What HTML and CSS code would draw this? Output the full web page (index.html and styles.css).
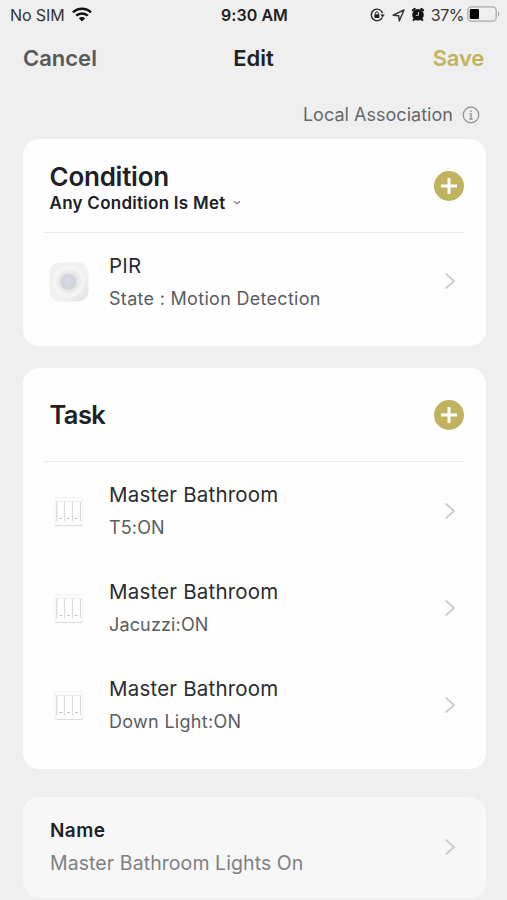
FILE: index.html
```html
<!DOCTYPE html>
<html lang="en">
<head>
<meta charset="utf-8">
<title>Edit</title>
<link rel="stylesheet" href="styles.css">
</head>
<body>
<svg width="0" height="0" class="defs" aria-hidden="true">
  <defs>
    <radialGradient id="ring"><stop offset="0" stop-color="#e2e3e6"/><stop offset=".6" stop-color="#e8e8ea"/><stop offset=".85" stop-color="#f6f6f6"/><stop offset="1" stop-color="#f2f2f2"/></radialGradient>
    <linearGradient id="shell" x1="0" y1="0" x2="1" y2="1"><stop offset="0" stop-color="#f0f0f0"/><stop offset=".6" stop-color="#f1f1f1"/><stop offset="1" stop-color="#e3e3e3"/></linearGradient>
    <radialGradient id="lens"><stop offset="0" stop-color="#d8dbe6"/><stop offset="1" stop-color="#d0d1da"/></radialGradient>
  </defs>
  <symbol id="chevron" viewBox="0 0 12 18"><path d="M1.700 1.500 10 9l-8.300 7.500" fill="none" stroke="#cbcccd" stroke-width="1.900"/></symbol>
  <symbol id="plus" viewBox="0 0 30 30"><circle cx="15" cy="15" r="15" fill="#c1b260"/><path d="M15 7v16M7 15h16" stroke="#fff" stroke-width="3"/></symbol>
  <symbol id="switch" viewBox="0 0 30 31">
    <path d="M1 1.500h27.500v28H1z" fill="#fcfcfc" stroke="#f4f4f4" stroke-width="1"/>
    <path d="M1 29.500h27.500" stroke="#dedede" stroke-width="1.200"/>
    <path d="M1 5.500h27.500" stroke="#ececec" stroke-width="1"/>
    <path d="M3 6h23.500v19H3z" fill="#fff"/>
    <path d="M2.700 6v19M10.500 6v19M18.500 6v19M26.500 6v19" stroke="#dadada" stroke-width="1.200"/>
    <path d="M5.700 22.500h2.300M13.300 22.500h2.300M21.200 22.500h2.300" stroke="#b5b5b5" stroke-width="1"/>
  </symbol>
</svg>
<header class="status">
  <div class="status-left"><span class="t carrier">No SIM</span>
    <svg class="wifi" width="20" height="15" viewBox="0 0 20 15"><g fill="none" stroke="#111" stroke-width="2.500"><path d="M1 5.300a13 13 0 0 1 18 0"/><path d="M4.200 8.700a8.400 8.400 0 0 1 11.600 0"/></g><path d="M10 14.600 6.800 11.300a4.600 4.600 0 0 1 6.400 0z" fill="#111"/></svg>
  </div>
  <span class="t clock">9:30 AM</span>
  <div class="status-right">
    <svg width="15" height="14" viewBox="0 0 15 14"><path d="M12.300 9.500a5.800 5.800 0 1 1 .3-4.300" fill="none" stroke="#222" stroke-width="1.300"/><path d="M10.400 6.600h4.400l-2.200 3z" fill="#222"/><rect x="4.400" y="6.300" width="5" height="3.700" rx=".4" fill="#222"/><path d="M5.400 6.500V5.300a1.500 1.500 0 0 1 3 0v1.200" fill="none" stroke="#222" stroke-width="1"/></svg>
    <svg class="nav-arrow" width="13" height="13" viewBox="0 0 13 13"><path d="M1.200 6.200 12 1 7.300 12 6.700 6.700z" fill="none" stroke="#333" stroke-width="1.400" stroke-linejoin="round"/></svg>
    <svg class="alarm" width="14" height="15" viewBox="0 0 14 15"><circle cx="7" cy="7.800" r="5.800" fill="#111"/><path d="M1.800 3.300 3.700 1.900M12.200 3.300 10.300 1.900M3.200 12.300l-.6.700M10.800 12.300l.6.700" stroke="#111" stroke-width="2" stroke-linecap="round"/><path d="M7.500 5v3.300H4.800" fill="none" stroke="#ccc" stroke-width="1"/></svg>
    <span class="t percent">37%</span>
    <svg class="battery" width="33" height="16" viewBox="0 0 33 16"><rect x=".8" y=".8" width="28.400" height="14.400" rx="3.800" fill="none" stroke="#a9a9a9" stroke-width="1.300"/><rect x="2.800" y="2.900" width="9.200" height="10.200" rx="1.300" fill="#000"/><path d="M31 5.500c1.700.6 1.700 4.400 0 5z" fill="#a9a9a9"/></svg>
  </div>
</header>
<nav class="nav"><span class="t cancel">Cancel</span><span class="t title">Edit</span><span class="t save">Save</span></nav>
<div class="local"><span class="t assoc">Local Association</span>
  <svg width="18" height="18" viewBox="0 0 18 18"><circle cx="9" cy="9" r="7.800" fill="none" stroke="#919294" stroke-width="1.200"/><path d="M9 4.300v1.800M7.600 7.700H9v5M7.300 13h3.400" fill="none" stroke="#919294" stroke-width="1.300"/></svg>
</div>
<main>
  <section class="card">
    <div class="head head-condition">
      <div class="head-text">
        <h2 class="t condition">Condition</h2>
        <div class="mode"><span class="t any">Any Condition Is Met</span><svg width="8" height="6" viewBox="0 0 8 6"><path d="m1 1.200 3 2.600 3-2.600" fill="none" stroke="#777" stroke-width="1.200"/></svg></div>
      </div>
      <svg class="add"><use href="#plus"/></svg>
    </div>
    <div class="row row-pir">
      <svg class="thumb" viewBox="0 0 40 40"><rect x=".5" y=".5" width="39" height="39" rx="10" fill="url(#shell)"/><circle cx="20" cy="19.500" r="16" fill="url(#ring)"/><circle cx="19.500" cy="19.800" r="8" fill="url(#lens)"/></svg>
      <div class="info"><span class="t pir">PIR</span><span class="t sub state">State : Motion Detection</span></div>
      <svg class="chev"><use href="#chevron"/></svg>
    </div>
  </section>
  <section class="card card-task">
    <div class="head head-task"><h2 class="t task">Task</h2><svg class="add"><use href="#plus"/></svg></div>
    <div class="row"><svg class="thumb switch"><use href="#switch"/></svg><div class="info"><span class="t room">Master Bathroom</span><span class="t sub t5">T5:ON</span></div><svg class="chev"><use href="#chevron"/></svg></div>
    <div class="row"><svg class="thumb switch"><use href="#switch"/></svg><div class="info"><span class="t room">Master Bathroom</span><span class="t sub jac">Jacuzzi:ON</span></div><svg class="chev"><use href="#chevron"/></svg></div>
    <div class="row"><svg class="thumb switch"><use href="#switch"/></svg><div class="info"><span class="t room">Master Bathroom</span><span class="t sub down">Down Light:ON</span></div><svg class="chev"><use href="#chevron"/></svg></div>
  </section>
  <section class="card card-name">
    <div class="info"><span class="t name">Name</span><span class="t sub value">Master Bathroom Lights On</span></div>
    <svg class="chev"><use href="#chevron"/></svg>
  </section>
</main>
</body>
</html>
```
FILE: styles.css
```css
* { box-sizing: border-box; }
body { margin: 0; height: 900px; overflow: hidden; background: #efefef; color: #202124; font-family: Inter, "Liberation Sans", sans-serif; }
svg { display: block; flex: none; }
.defs { position: absolute; }
.t { display: block; white-space: nowrap; margin: 0; }
.status { display: grid; grid-template-columns: 1fr auto 1fr; align-items: center; height: 30px; padding: 0 8px 0 10px; }
.status-left, .status-right { display: flex; align-items: center; }
.status-right { justify-content: flex-end; margin-right: -1px; }
.wifi { margin: -2px 0 0 7px; }
.carrier, .percent { font-size: 16px; line-height: 20px; color: #333; }
.carrier { letter-spacing: -.1px; }
.percent { letter-spacing: -.5px; }
.clock { font-size: 16px; line-height: 20px; font-weight: 600; letter-spacing: .05px; }
.nav-arrow { margin-left: 7px; }
.alarm { margin: -2px 6px 0 6px; }
.battery { margin: -2px 0 0 3px; }
.nav { display: grid; grid-template-columns: 1fr auto 1fr; align-items: center; height: 56px; padding: 0 23px; font-size: 22px; font-weight: 600; }
.title { margin-top: -1px; }
.cancel { color: #56585b; }
.save { color: #c1b260; justify-self: end; letter-spacing: -.2px; }
.local { display: flex; align-items: center; justify-content: flex-end; gap: 9px; height: 53px; padding: 4px 27px 0 0; }
.assoc { font-size: 18px; color: #66686a; letter-spacing: .03px; }
main { padding: 0 21.500px 0 22.500px; }
.card { height: 207px; border-radius: 16px; background: #fefefe; }
.card-task { height: 401px; margin-top: 22px; }
.head { display: flex; align-items: center; justify-content: space-between; margin: 0 21.500px; padding-left: 5.500px; border-bottom: 1px solid #ebebeb; }
.head-condition { height: 94px; }
.head-task { height: 94px; margin-bottom: 1px; }
.condition, .task { font-size: 26px; line-height: 30px; font-weight: 600; letter-spacing: -.25px; }
.task { font-size: 25.500px; letter-spacing: -.6px; padding-top: 1px; }
.mode { display: flex; align-items: center; gap: 7px; height: 22px; }
.any { font-size: 17px; line-height: 22px; font-weight: 600; letter-spacing: .27px; }
.add { width: 30px; height: 30px; }
.head-condition .head-text { padding-top: 5px; }
.row { display: flex; align-items: center; height: 97px; padding: 0 30px 0 26px; }
.thumb { width: 40px; height: 40px; margin-right: 20.500px; }
.switch { width: 30px; height: 31px; margin: 0 25.500px 0 5px; }
.info { flex: 1; }
.pir, .room { font-size: 20.500px; line-height: 32px; color: #2b2c2f; letter-spacing: .2px; }
.row-pir .info { padding-top: 2px; }
.sub { font-size: 18px; line-height: 33px; color: #5a5d60; letter-spacing: .3px; }
.t5, .jac { letter-spacing: .15px; }
.chev { width: 12px; height: 18px; margin-top: -1px; }
.card-name { display: flex; align-items: center; height: 101px; margin-top: 28px; padding: 0 30px 0 27.500px; background: #f7f7f7; }
.name { font-size: 19px; line-height: 32px; font-weight: 600; letter-spacing: .4px; }
.value { font-size: 19.500px; letter-spacing: .08px; color: #7e7f81; }
```
